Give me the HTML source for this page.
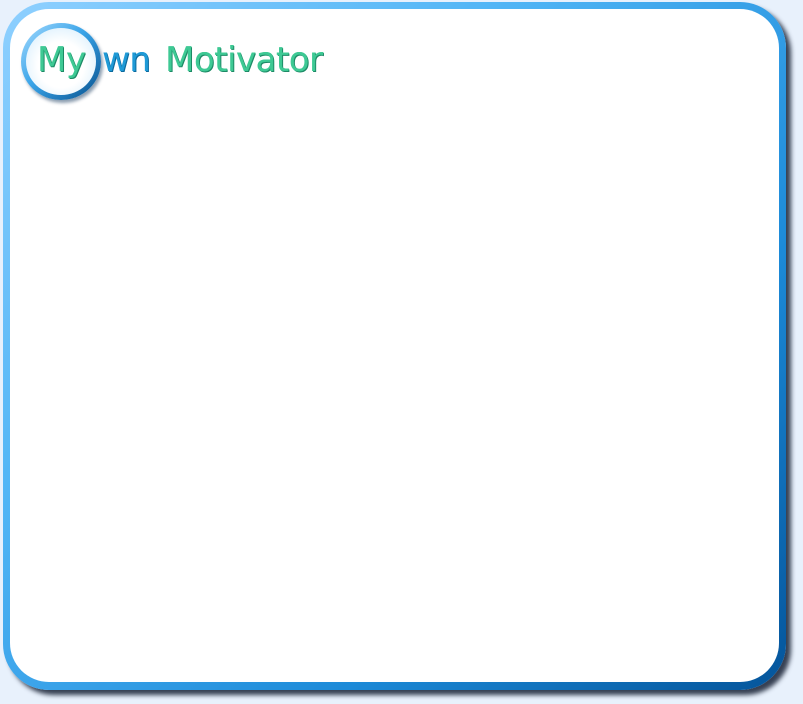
<!DOCTYPE html>
<html><head><style>
html,body{margin:0;padding:0;width:803px;height:704px;background:#e8f1fc;overflow:hidden}
.frame{position:absolute;left:3px;top:2px;width:783px;height:688px;border-radius:46px;
background:linear-gradient(135deg,#8fd0ff 0%,#4fb4f5 35%,#1c8ad8 70%,#04549a 100%);
box-shadow:5px 5px 5px rgba(10,20,40,0.8);}
.inner{position:absolute;left:7px;top:7px;right:7px;bottom:8px;border-radius:39px;background:#fff;}
.ring{position:absolute;left:21px;top:23px;width:80px;height:77px;border-radius:50%;
background:linear-gradient(135deg,#a5dbff 0%,#3aa4e8 45%,#064f8c 100%);box-shadow:2px 3px 3px rgba(0,40,80,.45)}
.ring::after{content:"";position:absolute;left:5px;top:5px;width:70px;height:67px;border-radius:50%;
background:radial-gradient(circle at 50% 55%,#ffffff 45%,#e3f3fd 75%,#c6e6fa 100%)}
.t{position:absolute;top:40px;font:34px "DejaVu Sans","Liberation Sans",sans-serif;color:#3ec994;text-shadow:1px 1px 0 #1d8a66,0.5px 0 0 #3ec994;z-index:2}
</style></head><body>
<div class="frame"><div class="inner"></div></div>
<div class="ring"></div>
<div class="t" style="left:37px;letter-spacing:-0.5px">My</div>
<div class="t" style="left:102px;color:#1f9ad6;text-shadow:1px 1px 0 #0b6a9e,0.5px 0 0 #1f9ad6;letter-spacing:-0.5px">wn</div>
<div class="t" style="left:165px;letter-spacing:-0.5px">Motivator</div>
</body></html>
